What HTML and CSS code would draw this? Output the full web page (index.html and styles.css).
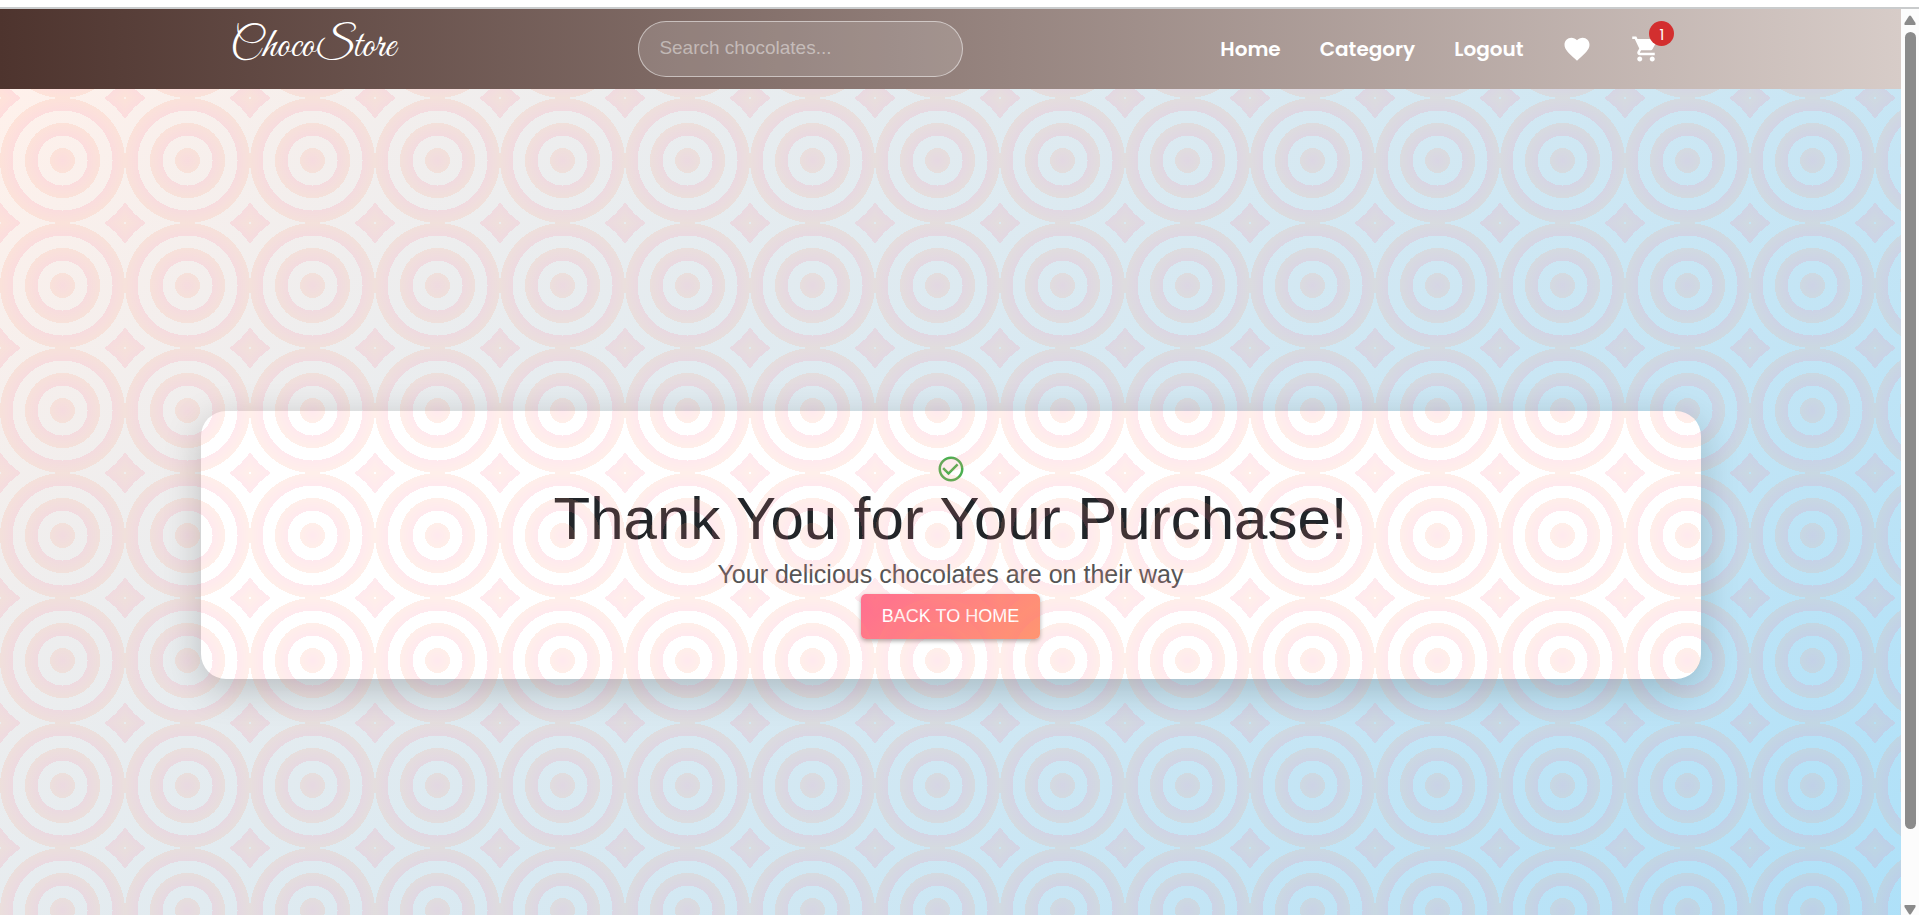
FILE: index.html
```html
<!DOCTYPE html>
<html lang="en">
<head>
<meta charset="utf-8">
<title>ChocoStore</title>
<link rel="stylesheet" href="styles.css">
</head>
<body>
<div class="window-edge"></div>
<div class="window">
  <div class="page">
    <header class="navbar">
      <div class="container navbar-inner">
        <a class="logo" href="#">ChocoStore</a>
        <input class="search" type="text" placeholder="Search chocolates..." aria-label="Search chocolates">
        <nav class="nav">
          <a class="nav-link" href="#">Home</a>
          <a class="nav-link" href="#">Category</a>
          <a class="nav-link" href="#">Logout</a>
          <button class="icon-button" type="button" aria-label="Favorites">
            <svg class="icon" viewBox="0 0 24 24"><path d="m12 21.35-1.45-1.32C5.4 15.36 2 12.28 2 8.5 2 5.42 4.42 3 7.5 3c1.74 0 3.41.81 4.5 2.09C13.09 3.81 14.76 3 16.5 3 19.58 3 22 5.42 22 8.5c0 3.78-3.4 6.86-8.55 11.54z"/></svg>
          </button>
          <button class="icon-button" type="button" aria-label="Cart">
            <svg class="icon" viewBox="0 0 24 24"><path d="M7 18c-1.1 0-1.99.9-1.99 2S5.9 22 7 22s2-.9 2-2-.9-2-2-2M1 2v2h2l3.6 7.59-1.35 2.45c-.16.28-.25.61-.25.96 0 1.1.9 2 2 2h12v-2H7.42c-.14 0-.25-.11-.25-.25l.03-.12.9-1.63h7.45c.75 0 1.41-.41 1.75-1.03l3.58-6.49c.08-.14.12-.31.12-.48 0-.55-.45-1-1-1H5.21l-.94-2zm16 16c-1.1 0-1.99.9-1.99 2s.89 2 1.99 2 2-.9 2-2-.9-2-2-2"/></svg>
            <span class="badge">1</span>
          </button>
        </nav>
      </div>
    </header>
    <main class="hero">
      <section class="container card">
        <svg class="icon check" viewBox="0 0 24 24"><path d="M16.59 7.58 10 14.17l-3.59-3.58L5 12l5 5 8-8zM12 2C6.48 2 2 6.48 2 12s4.48 10 10 10 10-4.48 10-10S17.52 2 12 2m0 18c-4.42 0-8-3.58-8-8s3.58-8 8-8 8 3.58 8 8-3.58 8-8 8"/></svg>
        <h1 class="title">Thank You for Your Purchase!</h1>
        <p class="subtitle">Your delicious chocolates are on their way</p>
        <button class="home-button" type="button">BACK TO HOME</button>
      </section>
    </main>
  </div>
  <div class="scrollbar" aria-hidden="true">
    <svg class="arrow" viewBox="0 0 12 10"><path d="M5 1Q6 0 7 1L11.5 8Q12 10 11 10H1Q0 10 .5 8Z"/></svg>
    <div class="track"><div class="thumb"></div></div>
    <svg class="arrow" viewBox="0 0 12 10"><path d="M5 9Q6 10 7 9L11.5 2Q12 0 11 0H1Q0 0 .5 2Z"/></svg>
  </div>
</div>
</body>
</html>
```
FILE: styles.css
```css
* {
  box-sizing: border-box;
}

body {
  margin: 0;
  height: 100vh;
  display: flex;
  flex-direction: column;
  overflow: hidden;
  font-family: "Liberation Sans", Arial, sans-serif;
  color: #212529;
}

.window-edge {
  flex: none;
  height: 9px;
  background: #fff;
  border-bottom: 2px solid #c9cbcc;
}

.window {
  flex: 1;
  min-height: 0;
  display: flex;
}

.page {
  flex: 1;
  min-width: 0;
  overflow: hidden;
}

.container {
  width: 100%;
  max-width: 1500px;
  margin: 0 auto;
}

.navbar {
  height: 80px;
  display: flex;
  background: linear-gradient(90deg, #4e342e, #d7ccc8);
}

.navbar-inner {
  display: flex;
  align-items: center;
  justify-content: space-between;
  padding: 0 39px 0 30px;
}

.logo {
  font-family: "Great Vibes", "Liberation Serif", cursive;
  font-size: 41px;
  line-height: 48px;
  padding-bottom: 4px;
  color: #fff;
  text-decoration: none;
}

.search {
  width: 325px;
  height: 56px;
  margin-right: 14px;
  padding: 0 20px 2px;
  border: 1px solid rgba(255, 255, 255, 0.5);
  border-radius: 28px;
  background: rgba(255, 255, 255, 0.15);
  font: 19px "Liberation Sans", Arial, sans-serif;
  color: #fff;
}

.search::placeholder {
  color: rgba(255, 255, 255, 0.45);
}

.nav {
  display: flex;
  align-items: center;
  gap: 39px;
}

.nav-link {
  font-family: Poppins, Inter, sans-serif;
  font-size: 20px;
  line-height: 28px;
  padding-bottom: 1px;
  font-weight: 600;
  color: #fff;
  text-decoration: none;
}

.icon-button {
  position: relative;
  display: flex;
  padding: 0;
  border: 0;
  background: none;
  color: #fff;
}

.icon {
  width: 30px;
  height: 30px;
  fill: currentColor;
}

.badge {
  position: absolute;
  top: -13px;
  right: -13px;
  width: 25px;
  height: 25px;
  border-radius: 50%;
  background: #d32f2f;
  color: #fff;
  font: 400 15px/27px Poppins, Roboto, sans-serif;
  text-align: center;
}

.hero {
  position: relative;
  min-height: calc(100vh - 4px);
  display: flex;
  align-items: center;
  background: linear-gradient(135deg, #fff1eb, #ace0f9);
}

/* Ring pattern laid over the whole section, card included */
.hero::after {
  content: "";
  position: absolute;
  inset: 0;
  pointer-events: none;
  opacity: 0.15;
  background: repeating-radial-gradient(circle at center, #ff6f91 0, #ff9671 12.5px, transparent 12.5px, transparent 25px);
  background-size: 125px 125px;
  background-position: 0 9px;
}

.card {
  display: flex;
  flex-direction: column;
  align-items: center;
  padding: 43px 40px 40px;
  border-radius: 25px;
  background: #fff;
  box-shadow: 0 10px 38px rgba(0, 0, 0, 0.2);
}

.check {
  color: #4caf50;
}

.title {
  margin: 0;
  font-size: 60px;
  font-weight: 400;
  line-height: 70px;
}

.subtitle {
  margin: 0;
  font-size: 25px;
  line-height: 40px;
  color: #555;
}

.home-button {
  height: 45px;
  padding: 0 21px;
  border: 0;
  border-radius: 5px;
  background: linear-gradient(135deg, #ff6f91, #ff9671);
  box-shadow: 0 2px 4px rgba(0, 0, 0, 0.35);
  color: #fff;
  font: 18px "Liberation Sans", Arial, sans-serif;
}

.scrollbar {
  flex: none;
  width: 18px;
  display: flex;
  flex-direction: column;
  align-items: center;
  gap: 7px;
  padding-top: 6px;
  background: #fcfcfc;
}

.arrow {
  flex: none;
  width: 12px;
  height: 10px;
  fill: #8b8b8b;
}

.track {
  flex: 1;
  width: 11px;
}

.thumb {
  height: 92%;
  border-radius: 6px;
  background: #8b8b8b;
}
```
